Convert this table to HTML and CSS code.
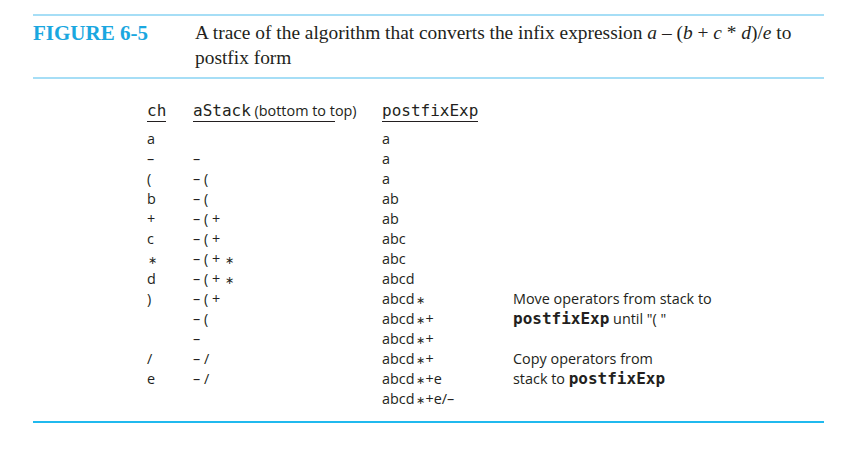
FILE: index.html
```html
<!DOCTYPE html>
<html>
<head>
<meta charset="utf-8">
<link rel="stylesheet" href="styles.css">
</head>
<body>
<div class="figure">
  <div class="head">
    <div class="label">FIGURE 6-5</div>
    <div class="caption">A trace of the algorithm that converts the infix expression <i>a</i> – (<i>b</i> + <i>c</i> * <i>d</i>)/<i>e</i> to postfix form</div>
  </div>
  <div class="body">
    <div class="trace">
      <div class="row hdr">
        <span class="c1"><span class="u mono">ch</span></span>
        <span class="c2"><span class="u"><span class="mono">aStack</span> (bottom to t</span>op)</span>
        <span class="c3"><span class="u mono">postfixExp</span></span>
        <span class="c4"></span>
      </div>
      <div class="row"><span class="c1">a</span><span class="c2"></span><span class="c3">a</span><span class="c4"></span></div>
      <div class="row"><span class="c1">–</span><span class="c2">–</span><span class="c3">a</span><span class="c4"></span></div>
      <div class="row"><span class="c1">(</span><span class="c2">– (</span><span class="c3">a</span><span class="c4"></span></div>
      <div class="row"><span class="c1">b</span><span class="c2">– (</span><span class="c3">ab</span><span class="c4"></span></div>
      <div class="row"><span class="c1">+</span><span class="c2">– ( +</span><span class="c3">ab</span><span class="c4"></span></div>
      <div class="row"><span class="c1">c</span><span class="c2">– ( +</span><span class="c3">abc</span><span class="c4"></span></div>
      <div class="row"><span class="c1"><span class="st">∗</span></span><span class="c2">– ( + <span class="st">∗</span></span><span class="c3">abc</span><span class="c4"></span></div>
      <div class="row"><span class="c1">d</span><span class="c2">– ( + <span class="st">∗</span></span><span class="c3">abcd</span><span class="c4"></span></div>
      <div class="row"><span class="c1">)</span><span class="c2">– ( +</span><span class="c3">abcd<span class="st">∗</span></span><span class="c4">Move operators from stack to</span></div>
      <div class="row"><span class="c1"></span><span class="c2">– (</span><span class="c3">abcd<span class="st">∗</span>+</span><span class="c4"><b class="mono">postfixExp</b> until "( "</span></div>
      <div class="row"><span class="c1"></span><span class="c2">–</span><span class="c3">abcd<span class="st">∗</span>+</span><span class="c4"></span></div>
      <div class="row"><span class="c1">/</span><span class="c2">– /</span><span class="c3">abcd<span class="st">∗</span>+</span><span class="c4">Copy operators from</span></div>
      <div class="row"><span class="c1">e</span><span class="c2">– /</span><span class="c3">abcd<span class="st">∗</span>+e</span><span class="c4">stack to <b class="mono">postfixExp</b></span></div>
      <div class="row"><span class="c1"></span><span class="c2"></span><span class="c3">abcd<span class="st">∗</span>+e/–</span><span class="c4"></span></div>
    </div>
  </div>
</div>
</body>
</html>
```

FILE: styles.css
```css
html, body {
  margin: 0;
  padding: 0;
  background: #ffffff;
}

.figure {
  margin: 14px 0 0 33px;
  width: 791px;
}

.head {
  display: flex;
  border-top: 2px solid #a6def6;
  border-bottom: 2px solid #a6def6;
  padding: 4px 0 7px 0;
  font-family: "Liberation Serif", "Times New Roman", serif;
  color: #231f20;
}

.label {
  width: 162px;
  flex: none;
  font-weight: bold;
  font-size: 21px;
  line-height: 26px;
  color: #1aa7e0;
}

.caption {
  font-size: 19.4px;
  line-height: 25px;
  width: 629px;
}

.caption i {
  font-style: italic;
}

.body {
  border-bottom: 2px solid #20b9ee;
  padding: 21px 0 12px 0;
}

.trace {
  font-family: "Open Sans", "Noto Sans", sans-serif;
  font-size: 14.4px;
  color: #231f20;
}

.row {
  display: grid;
  grid-template-columns: 46px 189px 131px 1fr;
  height: 20px;
  line-height: 20px;
  padding-left: 114px;
}

.row.hdr {
  height: 25px;
  line-height: 22px;
  margin-bottom: 4px;
}

.mono {
  font-family: "DejaVu Sans Mono", "Liberation Mono", monospace;
  font-size: 16px;
}

.u {
  border-bottom: 1px solid #231f20;
  padding-bottom: 1px;
}

.c4 b.mono {
  font-weight: bold;
  font-size: 16px;
}

.st {
  font-size: 11px;
  padding: 0 1px;
}
```
